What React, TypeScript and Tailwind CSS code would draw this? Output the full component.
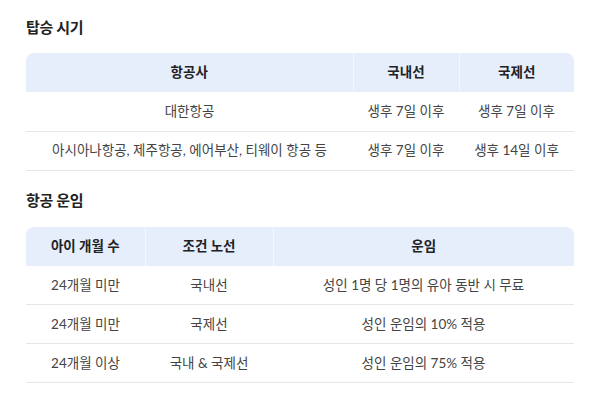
const font = { fontFamily: 'Lato, "Noto Sans CJK KR", "Noto Sans", sans-serif' };

type Col = { label: string; width: string };

function InfoTable({ cols, rows }: { cols: Col[]; rows: string[][] }) {
  return (
    <table className="w-full table-fixed border-collapse text-[13.5px]">
      <colgroup>
        {cols.map((c) => (
          <col key={c.label} style={{ width: c.width }} />
        ))}
      </colgroup>
      <thead>
        <tr>
          {cols.map((c, i) => (
            <th
              key={c.label}
              className={`h-[39px] bg-[#e6eefc] font-bold text-[#222] text-center ${
                i === 0 ? "rounded-tl-[8px]" : "border-l border-[#f4f7fe]"
              } ${i === cols.length - 1 ? "rounded-tr-[8px]" : ""}`}
            >
              {c.label}
            </th>
          ))}
        </tr>
      </thead>
      <tbody>
        {rows.map((r, ri) => (
          <tr key={ri} className="border-b border-[#e6e6e6]">
            {r.map((cell, ci) => (
              <td key={ci} className="h-[39px] text-center text-[#444]">
                {cell}
              </td>
            ))}
          </tr>
        ))}
      </tbody>
    </table>
  );
}

export default function App() {
  return (
    <div className="w-[600px] h-[409px] bg-white px-[26px] pt-[14px]" style={font}>
      <h2 className="text-[15px] font-bold leading-[26px] text-[#222] tracking-[-0.3px]">탑승 시기</h2>
      <div className="mt-[13px] w-[548px]">
        <InfoTable
          cols={[
            { label: "항공사", width: "327px" },
            { label: "국내선", width: "106px" },
            { label: "국제선", width: "115px" },
          ]}
          rows={[
            ["대한항공", "생후 7일 이후", "생후 7일 이후"],
            ["아시아나항공, 제주항공, 에어부산, 티웨이 항공 등", "생후 7일 이후", "생후 14일 이후"],
          ]}
        />
      </div>

      <h2 className="mt-[16px] text-[15px] font-bold leading-[26px] text-[#222] tracking-[-0.3px]">항공 운임</h2>
      <div className="mt-[14px] w-[548px]">
        <InfoTable
          cols={[
            { label: "아이 개월 수", width: "119px" },
            { label: "조건 노선", width: "128px" },
            { label: "운임", width: "301px" },
          ]}
          rows={[
            ["24개월 미만", "국내선", "성인 1명 당 1명의 유아 동반 시 무료"],
            ["24개월 미만", "국제선", "성인 운임의 10% 적용"],
            ["24개월 이상", "국내 & 국제선", "성인 운임의 75% 적용"],
          ]}
        />
      </div>
    </div>
  );
}
